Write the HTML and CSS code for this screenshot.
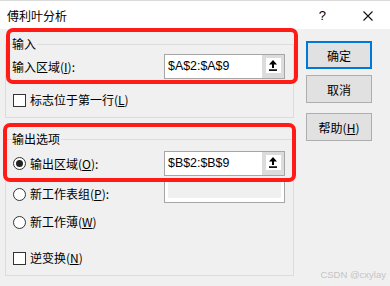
FILE: index.html
```html
<!DOCTYPE html>
<html lang="zh-CN">
<head>
  <meta charset="UTF-8" />
  <title>傅利叶分析</title>
  <link rel="stylesheet" href="styles.css">
</head>
<body>
  <div class="dialog">
    <div class="titlebar">
      <span class="title">傅利叶分析</span>
      <span class="help">?</span>
      <span class="close">
        <svg width="10" height="10" viewBox="0 0 10 10"><path d="M0.5 0.5 L9.5 9.5 M9.5 0.5 L0.5 9.5" stroke="#111" stroke-width="1.1" fill="none"/></svg>
      </span>
    </div>

    <div class="content">
      <div class="groups">
        <fieldset class="group group-in">
          <legend>输入</legend>
          <div class="field-row">
            <label class="field-label">输入区域(<u>I</u>):</label>
            <div class="ref-input">
              <span class="ref-text">$A$2:$A$9</span>
              <span class="ref-btn">
                <span class="ref-icon">
                  <svg width="8" height="11" viewBox="0 0 8 11"><path d="M4 0 L8 4.5 L5 4.5 L5 8 L3 8 L3 4.5 L0 4.5 Z" fill="#000"/><rect x="0" y="9.3" width="8" height="1.6" fill="#000"/></svg>
                </span>
              </span>
            </div>
          </div>
          <label class="opt-row opt-first"><span class="checkbox"></span><span>标志位于第一行(<u>L</u>)</span></label>
        </fieldset>

        <fieldset class="group group-out">
          <legend>输出选项</legend>
          <div class="field-row">
            <label class="field-label opt-label"><span class="radio checked"></span><span>输出区域(<u>O</u>):</span></label>
            <div class="ref-input">
              <span class="ref-text">$B$2:$B$9</span>
              <span class="ref-btn">
                <span class="ref-icon">
                  <svg width="8" height="11" viewBox="0 0 8 11"><path d="M4 0 L8 4.5 L5 4.5 L5 8 L3 8 L3 4.5 L0 4.5 Z" fill="#000"/><rect x="0" y="9.3" width="8" height="1.6" fill="#000"/></svg>
                </span>
              </span>
            </div>
          </div>
          <div class="field-row field-row-sheet">
            <label class="field-label opt-label opt-low"><span class="radio"></span><span>新工作表组(<u>P</u>):</span></label>
            <div class="ref-input ref-disabled"><span class="ref-fill"></span></div>
          </div>
          <label class="opt-row opt-book"><span class="radio"></span><span>新工作薄(<u>W</u>)</span></label>
          <label class="opt-row opt-inverse"><span class="checkbox"></span><span>逆变换(<u>N</u>)</span></label>
        </fieldset>
      </div>

      <div class="actions">
        <button class="btn btn-default">确定</button>
        <button class="btn">取消</button>
        <button class="btn btn-help">帮助(<u>H</u>)</button>
      </div>
    </div>

    <div class="mark mark-in"></div>
    <div class="mark mark-out"></div>
    <div class="watermark">CSDN @cxylay</div>
  </div>
</body>
</html>
```

FILE: styles.css
```css
html, body {
  margin: 0;
  padding: 0;
}

body {
  font-family: "Noto Sans CJK SC", "Microsoft YaHei", sans-serif;
  font-size: 12px;
  color: #000;
  background: #f0f0f0;
}

.dialog {
  position: relative;
  width: 390px;
  height: 286px;
  background: #f0f0f0;
  overflow: hidden;
}

.titlebar {
  height: 28px;
  background: #fff;
  border-top: 1px solid #dadada;
  display: flex;
  align-items: center;
  padding-left: 7px;
}

.title {
  font-size: 12px;
  line-height: 16px;
  padding-top: 2px;
}

.help {
  margin-left: auto;
  font-family: "Liberation Sans", sans-serif;
  font-size: 13px;
  padding-top: 1px;
}

.close {
  display: flex;
  margin-left: 37px;
  margin-right: 17px;
  padding-top: 2px;
}

.content {
  display: flex;
  align-items: flex-start;
  padding-left: 5px;
}

.groups {
  width: 289px;
}

.group {
  margin: 0;
  min-width: 0;
  border: 1px solid #dcdcdc;
  padding: 3px 8px 9px 6px;
}

.group legend {
  padding: 0 1px 0 0;
  line-height: 14px;
}

.group-in {
  margin-top: 8px;
}

.group-out {
  margin-top: 14px;
  padding-top: 5px;
}

.field-row {
  display: flex;
  align-items: center;
  height: 25px;
}

.field-row-sheet {
  margin-top: 2px;
  align-items: flex-start;
}

.field-label {
  width: 152px;
  line-height: 16px;
}

.opt-label {
  display: flex;
  align-items: center;
  gap: 4px;
  padding-left: 1px;
  box-sizing: border-box;
}

.opt-low {
  margin-top: 8px;
}

.ref-input {
  display: flex;
  width: 121px;
  height: 25px;
  box-sizing: border-box;
  border: 1px solid #a6a6a6;
  background: #fff;
}

.ref-text {
  flex: 1;
  padding-left: 3px;
  font-family: "Liberation Sans", sans-serif;
  font-size: 12.4px;
  line-height: 23px;
}

.ref-btn {
  width: 22px;
  background: #dcdcdc;
  display: flex;
  align-items: center;
  justify-content: center;
}

.ref-icon {
  width: 15px;
  height: 15px;
  background: #fff;
  display: flex;
  align-items: center;
  justify-content: center;
  margin-top: -2px;
}

.ref-disabled {
  padding: 3px 3px 4px 3px;
}

.ref-fill {
  flex: 1;
  background: #f0f0f0;
}

.opt-row {
  display: flex;
  align-items: center;
  gap: 4px;
  height: 16px;
  line-height: 16px;
  padding-left: 1px;
}

.opt-first {
  margin-top: 13px;
}

.opt-book {
  margin-top: 11px;
}

.opt-inverse {
  margin-top: 20px;
}

.checkbox {
  width: 13px;
  height: 13px;
  box-sizing: border-box;
  border: 1px solid #333;
  background: #fff;
}

.radio {
  width: 13px;
  height: 13px;
  box-sizing: border-box;
  border: 1px solid #333;
  border-radius: 50%;
  background: #fff;
  display: flex;
  align-items: center;
  justify-content: center;
}

.radio.checked::after {
  content: "";
  width: 7px;
  height: 7px;
  border-radius: 50%;
  background: #222;
}

.actions {
  display: flex;
  flex-direction: column;
  margin-left: 12px;
  margin-top: 12px;
}

.btn {
  width: 66px;
  height: 28px;
  margin: 0;
  padding: 0;
  font-family: inherit;
  font-size: 12px;
  color: #000;
  background: #e1e1e1;
  border: 1px solid #adadad;
}

.btn + .btn {
  margin-top: 6px;
}

.btn-default {
  border: 2px solid #0078d7;
}

.btn-help {
  margin-top: 10px !important;
}

.mark {
  position: absolute;
  box-sizing: border-box;
  border: 4.5px solid #ff1b16;
  border-radius: 7px;
}

.mark-in {
  left: 6px;
  top: 28px;
  width: 292px;
  height: 56px;
}

.mark-out {
  left: 3px;
  top: 123px;
  width: 293px;
  height: 59px;
}

.watermark {
  position: absolute;
  right: 4px;
  bottom: 6px;
  font-family: "Liberation Sans", sans-serif;
  font-size: 9.5px;
  color: #c4c4c4;
}
```
